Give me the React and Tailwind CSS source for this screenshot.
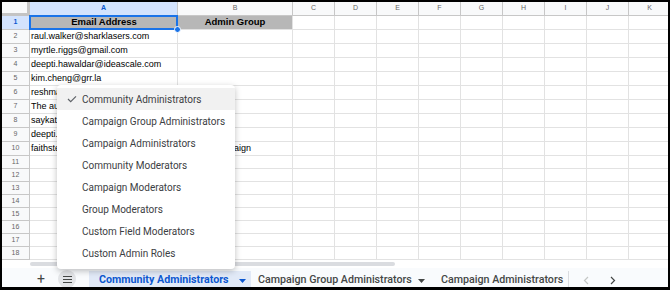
import React from "react";

const cols = ["C", "D", "E", "F", "G", "H", "I", "J", "K"];

const rowsA = [
  "raul.walker@sharklasers.com",
  "myrtle.riggs@gmail.com",
  "deepti.hawaldar@ideascale.com",
  "kim.cheng@grr.la",
  "reshma.patel@ideascale.com",
  "The auditor@ideascale.com",
  "saykat.das@ideascale.com",
  "deepti.h@ideascale.com",
  "faithstevens@ideascale.com - Test Ideas for Campaign",
];

const menuItems = [
  "Community Administrators",
  "Campaign Group Administrators",
  "Campaign Administrators",
  "Community Moderators",
  "Campaign Moderators",
  "Group Moderators",
  "Custom Field Moderators",
  "Custom Admin Roles",
];

function Row({ n, h, a, b, gray, selected }) {
  return (
    <div className="flex shrink-0" style={{ height: h }}>
      <div
        className={`w-[28px] shrink-0 flex items-center justify-center border-r border-b border-[#c7c7c7] text-[7px] ${
          selected ? "bg-[#d3e3fd] text-[#0b57d0] font-bold" : "bg-[#f8f9fa] text-[#666]"
        }`}
      >
        {n}
      </div>
      <div
        className={`relative w-[148px] shrink-0 border-r border-b border-[#e2e2e2] flex items-center pl-[1px] text-black whitespace-nowrap ${
          gray ? "bg-[#b7b7b7] justify-center font-bold text-[9.5px]" : "text-[9px]"
        }`}
      >
        {selected && (
          <div className="absolute left-[-1px] top-[-1px] right-[-1px] bottom-[-1px] border-2 border-[#1a73e8] z-10">
            <div className="absolute right-[-5px] bottom-[-5px] w-[7px] h-[7px] rounded-full bg-[#1a73e8] border border-white" />
          </div>
        )}
        <span className="relative z-[5]">{a}</span>
      </div>
      <div
        className={`w-[115px] shrink-0 border-r border-b border-[#e2e2e2] flex items-center justify-center ${
          gray ? "bg-[#b7b7b7] font-bold text-[9.5px]" : "text-[9px]"
        }`}
      >
        {b}
      </div>
      {cols.map((c) => (
        <div key={c} className="w-[42px] shrink-0 border-r border-b border-[#e2e2e2]" />
      ))}
    </div>
  );
}

function Tri({ color }) {
  return (
    <svg width="7" height="4" viewBox="0 0 7 4" className="shrink-0">
      <path d="M0 0 L7 0 L3.5 4 Z" fill={color} />
    </svg>
  );
}

export default function App() {
  const rows = [];
  for (let i = 2; i <= 18; i++) {
    rows.push(<Row key={i} n={i} h={i <= 10 ? 14 : 13} a={rowsA[i - 2] || ""} b="" />);
  }
  return (
    <div
      className="relative w-[670px] h-[290px] overflow-hidden bg-white border-l-2 border-r-2 border-t-2 border-b-[3px] border-black flex flex-col"
      style={{ fontFamily: '"Liberation Sans", Arial, sans-serif' }}
    >
      {/* grid */}
      <div className="flex flex-col shrink-0 h-[258px] overflow-hidden">
        <div className="flex shrink-0 h-[14px]">
          <div className="w-[28px] shrink-0 bg-[#f8f9fa] border-r-[3px] border-b-[3px] border-[#c4c4c4]" />
          <div className="w-[148px] shrink-0 bg-[#d3e3fd] border-r border-b border-[#c7c7c7] flex items-center justify-center text-[7px] text-[#0b57d0] font-bold">
            A
          </div>
          <div className="w-[115px] shrink-0 bg-[#f8f9fa] border-r border-b border-[#c7c7c7] flex items-center justify-center text-[7px] text-[#666]">
            B
          </div>
          {cols.map((c) => (
            <div
              key={c}
              className="w-[42px] shrink-0 bg-[#f8f9fa] border-r border-b border-[#c7c7c7] flex items-center justify-center text-[7px] text-[#666]"
            >
              {c}
            </div>
          ))}
        </div>
        <Row n={1} h={14} a="Email Address" b="Admin Group" gray selected />
        {rows}
      </div>
      {/* scrollbar strip */}
      <div className="shrink-0 h-[8px] flex items-center pl-[28px] bg-white">
        <div className="w-[365px] h-[4px] rounded-full bg-[#dadce0]" />
      </div>
      {/* tab bar */}
      <div
        className="flex-1 flex items-end bg-[#f9fbfd] text-[10.7px]"
        style={{ fontFamily: 'Roboto, "Liberation Sans", sans-serif' }}
      >
        <div className="h-full w-[30px] shrink-0" />
        <div className="h-full flex items-center justify-center w-[18px] pt-[2px] text-[#444746] text-[14px] leading-none">
          +
        </div>
        <div className="h-full flex items-center ml-[8px] pt-[2px]">
          <div className="w-[18px] h-[18px] rounded-full bg-[#e3e5e8] flex items-center justify-center">
            <svg width="9" height="7" viewBox="0 0 9 7">
              <path d="M0 0.5H9M0 3.5H9M0 6.5H9" stroke="#444746" strokeWidth="1" />
            </svg>
          </div>
        </div>
        <div className="ml-[13px] h-[17px] w-[162px] shrink-0 bg-[#e1e9f7] flex items-center pt-[2px] pl-[10px] gap-[10px]">
          <span className="font-bold text-[#0b57d0] whitespace-nowrap">Community Administrators</span>
          <Tri color="#0b57d0" />
        </div>
        <div className="w-[180px] shrink-0 h-[17px] flex items-center pt-[2px] pl-[7px] pr-[6px] justify-between text-[#444746] font-medium">
          <span className="whitespace-nowrap">Campaign Group Administrators</span>
          <Tri color="#444746" />
        </div>
        <div className="w-[138px] shrink-0 h-[17px] flex items-center pt-[2px] pl-[10px] text-[#444746] font-medium border-r border-[#dadce0]">
          <span className="whitespace-nowrap">Campaign Administrators</span>
        </div>
        <div className="h-[17px] flex items-center pt-[2px] pl-[14px] gap-[21px]">
          <svg width="6" height="9" viewBox="0 0 6 9">
            <path d="M5 1 L1.5 4.5 L5 8" stroke="#c4c7c5" strokeWidth="1.2" fill="none" />
          </svg>
          <svg width="6" height="9" viewBox="0 0 6 9">
            <path d="M1 1 L4.5 4.5 L1 8" stroke="#444746" strokeWidth="1.2" fill="none" />
          </svg>
        </div>
      </div>
      {/* dropdown menu */}
      <div
        className="absolute left-[55px] top-[83px] w-[178px] h-[184px] bg-white rounded-[4px] shadow-[0_2px_6px_rgba(0,0,0,0.25)] pt-[3px] z-20"
        style={{ fontFamily: 'Roboto, "Liberation Sans", sans-serif' }}
      >
        {menuItems.map((m, i) => (
          <div
            key={m}
            className={`h-[22px] flex items-center text-[10px] text-[#3c4043] ${i === 0 ? "bg-[#f1f1f1]" : ""}`}
          >
            <div className="w-[25px] shrink-0 flex justify-end pr-[5px]">
              {i === 0 && (
                <svg width="10" height="8" viewBox="0 0 10 8">
                  <path d="M1 4 L3.7 6.7 L9 1.3" stroke="#5f6368" strokeWidth="1.2" fill="none" />
                </svg>
              )}
            </div>
            <span>{m}</span>
          </div>
        ))}
      </div>
    </div>
  );
}
